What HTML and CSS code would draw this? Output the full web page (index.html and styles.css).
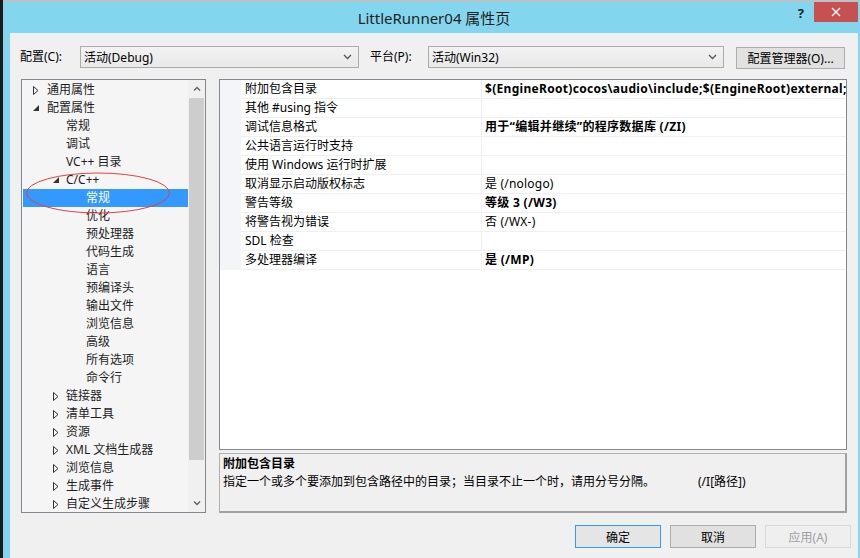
FILE: index.html
```html
<!DOCTYPE html>
<html lang="zh-CN">
<head>
    <meta charset="UTF-8">
    <title>LittleRunner04 属性页</title>
    <link rel="stylesheet" href="styles.css">
</head>
<body>
    <div class="window">
        <div class="titlebar">
            <div></div>
            <div class="title">LittleRunner04 属性页</div>
            <div class="caption-btns">
                <span class="help">?</span>
                <span class="close">
                    <svg width="10" height="10" viewBox="0 0 10 10"><path d="M1 1 L9 9 M9 1 L1 9" stroke="#fff" stroke-width="1.4" fill="none"/></svg>
                </span>
            </div>
        </div>

        <div class="dialog">
            <div class="toolbar">
                <label class="lbl lbl-config">配置(C):</label>
                <div class="combo combo-config">
                    <span>活动(Debug)</span>
                    <svg width="9" height="6" viewBox="0 0 9 6"><path d="M1 1 L4.5 4.5 L8 1" stroke="#555" stroke-width="1.3" fill="none"/></svg>
                </div>
                <label class="lbl lbl-platform">平台(P):</label>
                <div class="combo combo-platform">
                    <span>活动(Win32)</span>
                    <svg width="9" height="6" viewBox="0 0 9 6"><path d="M1 1 L4.5 4.5 L8 1" stroke="#555" stroke-width="1.3" fill="none"/></svg>
                </div>
                <button class="btn btn-manager">配置管理器(O)...</button>
            </div>

            <div class="main">
                <div class="tree">
                    <div class="tree-list">
                        <div class="node lv0"><span class="tw"><svg width="6" height="9" viewBox="0 0 6 9"><path d="M0.5 0.5 L5 4.5 L0.5 8.5 Z" stroke="#333" fill="none"/></svg></span>通用属性</div>
                        <div class="node lv0"><span class="tw"><svg width="6" height="6" viewBox="0 0 6 6"><path d="M6 0 L6 6 L0 6 Z" fill="#333"/></svg></span>配置属性</div>
                        <div class="node lv1">常规</div>
                        <div class="node lv1">调试</div>
                        <div class="node lv1">VC++ 目录</div>
                        <div class="node lv1x"><span class="tw"><svg width="6" height="6" viewBox="0 0 6 6"><path d="M6 0 L6 6 L0 6 Z" fill="#333"/></svg></span>C/C++</div>
                        <div class="node lv2 selected">常规</div>
                        <div class="node lv2">优化</div>
                        <div class="node lv2">预处理器</div>
                        <div class="node lv2">代码生成</div>
                        <div class="node lv2">语言</div>
                        <div class="node lv2">预编译头</div>
                        <div class="node lv2">输出文件</div>
                        <div class="node lv2">浏览信息</div>
                        <div class="node lv2">高级</div>
                        <div class="node lv2">所有选项</div>
                        <div class="node lv2">命令行</div>
                        <div class="node lv1x"><span class="tw"><svg width="6" height="9" viewBox="0 0 6 9"><path d="M0.5 0.5 L5 4.5 L0.5 8.5 Z" stroke="#333" fill="none"/></svg></span>链接器</div>
                        <div class="node lv1x"><span class="tw"><svg width="6" height="9" viewBox="0 0 6 9"><path d="M0.5 0.5 L5 4.5 L0.5 8.5 Z" stroke="#333" fill="none"/></svg></span>清单工具</div>
                        <div class="node lv1x"><span class="tw"><svg width="6" height="9" viewBox="0 0 6 9"><path d="M0.5 0.5 L5 4.5 L0.5 8.5 Z" stroke="#333" fill="none"/></svg></span>资源</div>
                        <div class="node lv1x"><span class="tw"><svg width="6" height="9" viewBox="0 0 6 9"><path d="M0.5 0.5 L5 4.5 L0.5 8.5 Z" stroke="#333" fill="none"/></svg></span>XML 文档生成器</div>
                        <div class="node lv1x"><span class="tw"><svg width="6" height="9" viewBox="0 0 6 9"><path d="M0.5 0.5 L5 4.5 L0.5 8.5 Z" stroke="#333" fill="none"/></svg></span>浏览信息</div>
                        <div class="node lv1x"><span class="tw"><svg width="6" height="9" viewBox="0 0 6 9"><path d="M0.5 0.5 L5 4.5 L0.5 8.5 Z" stroke="#333" fill="none"/></svg></span>生成事件</div>
                        <div class="node lv1x"><span class="tw"><svg width="6" height="9" viewBox="0 0 6 9"><path d="M0.5 0.5 L5 4.5 L0.5 8.5 Z" stroke="#333" fill="none"/></svg></span>自定义生成步骤</div>
                    </div>
                    <div class="vscroll">
                        <div class="arrow"><svg width="8" height="5" viewBox="0 0 8 5"><path d="M1 4.5 L4 1.5 L7 4.5" stroke="#606060" stroke-width="1.4" fill="none"/></svg></div>
                        <div class="track"><div class="thumb"></div></div>
                        <div class="arrow"><svg width="8" height="5" viewBox="0 0 8 5"><path d="M1 0.5 L4 3.5 L7 0.5" stroke="#606060" stroke-width="1.4" fill="none"/></svg></div>
                    </div>
                    <!-- red annotation circle -->
                    <svg class="mark" width="148" height="44" viewBox="0 0 148 44"><ellipse cx="74" cy="22" rx="71.5" ry="20" stroke="#e3423e" stroke-width="1" fill="none"/></svg>
                </div>

                <div class="right">
                    <div class="grid">
                        <div class="row"><div class="margin"></div><div class="name">附加包含目录</div><div class="value bold">$(EngineRoot)cocos\audio\include;$(EngineRoot)external;$(EngineRoot)external\chipmunk\include</div></div>
                        <div class="row"><div class="margin"></div><div class="name">其他 #using 指令</div><div class="value"></div></div>
                        <div class="row"><div class="margin"></div><div class="name">调试信息格式</div><div class="value bold">用于“编辑并继续”的程序数据库 (/ZI)</div></div>
                        <div class="row"><div class="margin"></div><div class="name">公共语言运行时支持</div><div class="value"></div></div>
                        <div class="row"><div class="margin"></div><div class="name">使用 Windows 运行时扩展</div><div class="value"></div></div>
                        <div class="row"><div class="margin"></div><div class="name">取消显示启动版权标志</div><div class="value">是 (/nologo)</div></div>
                        <div class="row"><div class="margin"></div><div class="name">警告等级</div><div class="value bold">等级 3 (/W3)</div></div>
                        <div class="row"><div class="margin"></div><div class="name">将警告视为错误</div><div class="value">否 (/WX-)</div></div>
                        <div class="row"><div class="margin"></div><div class="name">SDL 检查</div><div class="value"></div></div>
                        <div class="row"><div class="margin"></div><div class="name">多处理器编译</div><div class="value bold">是 (/MP)</div></div>
                    </div>
                    <div class="desc">
                        <div class="desc-title">附加包含目录</div>
                        <div class="desc-text">指定一个或多个要添加到包含路径中的目录；当目录不止一个时，请用分号分隔。<span class="switch">(/I[路径])</span></div>
                    </div>
                </div>
            </div>

            <div class="footer">
                <button class="btn btn-ok">确定</button>
                <button class="btn">取消</button>
                <button class="btn btn-disabled">应用(A)</button>
            </div>
        </div>
    </div>
</body>
</html>
```

FILE: styles.css
```css
body {
    margin: 0;
    width: 860px;
    height: 558px;
    overflow: hidden;
    background-color: #1b1b1b;
    font-family: "Noto Sans", "Noto Sans CJK SC", sans-serif;
    font-size: 12px;
    color: #000;
}
.window {
    margin-left: 3px;
    height: 556px;
    border-top: 2px solid #b9c3c7;
    background-color: #84d6ee;
    padding: 0 2px 0 7px;
    display: flex;
    flex-direction: column;
}
.titlebar {
    height: 31px;
    display: grid;
    grid-template-columns: 1fr auto 1fr;
}
.title {
    font-size: 15px;
    line-height: 20px;
    margin-top: 6px;
    color: #1e1e1e;
}
.caption-btns {
    display: flex;
    justify-content: flex-end;
    align-items: flex-start;
}
.help {
    font-weight: bold;
    font-size: 13px;
    line-height: 16px;
    margin-top: 3px;
    margin-right: 10px;
    color: #222;
}
.close {
    width: 44px;
    height: 20px;
    background-color: #c75050;
    display: flex;
    align-items: center;
    justify-content: center;
}
.dialog {
    flex: 1;
    background-color: #f0f0f0;
    padding: 13px 11px 0 10px;
}
.toolbar {
    display: flex;
    align-items: flex-start;
    height: 23px;
}
.lbl {
    line-height: 22px;
    flex-shrink: 0;
}
.lbl-config {
    width: 60px;
}
.lbl-platform {
    width: 58px;
    margin-left: 11px;
}
.combo {
    box-sizing: border-box;
    height: 22px;
    border: 1px solid #acacac;
    background: linear-gradient(#f2f2f2, #e9e9e9);
    display: flex;
    align-items: center;
    justify-content: space-between;
    padding: 0 6px 0 3px;
    flex-shrink: 0;
}
.combo-config {
    width: 279px;
}
.combo-platform {
    width: 296px;
}
.btn {
    box-sizing: border-box;
    font-family: inherit;
    font-size: 12px;
    border: 1px solid #adadad;
    background-color: #e1e1e1;
    color: #000;
    padding: 0;
    height: 23px;
}
.btn-manager {
    width: 109px;
    height: 22px;
    margin-left: 12px;
    margin-top: 1px;
}
.main {
    margin-top: 10px;
    margin-left: 1px;
    display: flex;
    gap: 13px;
}
.tree {
    position: relative;
    box-sizing: border-box;
    width: 185px;
    height: 434px;
    border: 1px solid #828790;
    background-color: #f5f5f5;
    display: flex;
}
.tree-list {
    flex: 1;
    padding: 1px 0 0 1px;
    overflow: hidden;
}
.node {
    height: 18px;
    line-height: 18px;
    white-space: nowrap;
    display: flex;
    align-items: center;
    color: #1e1e1e;
}
.node.lv0 {
    padding-left: 10px;
}
.node.lv0 .tw {
    width: 14px;
}
.node.lv1 {
    padding-left: 43px;
}
.node.lv1x {
    padding-left: 30px;
}
.node.lv1x .tw {
    width: 13px;
}
.node.lv2 {
    padding-left: 63px;
}
.tw {
    display: flex;
    align-items: center;
}
.node.selected {
    background-color: #3399ff;
    color: #fff;
}
.vscroll {
    width: 17px;
    display: flex;
    flex-direction: column;
    background-color: #f0f0f0;
}
.arrow {
    height: 17px;
    display: flex;
    align-items: center;
    justify-content: center;
}
.track {
    flex: 1;
    padding: 1px 1px 0 1px;
}
.thumb {
    height: 362px;
    background-color: #cdcdcd;
}
.mark {
    position: absolute;
    left: 2px;
    top: 91px;
}
.right {
    width: 628px;
    display: flex;
    flex-direction: column;
    gap: 3px;
}
.grid {
    box-sizing: border-box;
    height: 371px;
    border: 1px solid #828790;
    background-color: #fff;
    overflow: hidden;
}
.row {
    display: flex;
    height: 19px;
}
.margin {
    width: 21px;
    background-color: #f3f5f8;
    flex-shrink: 0;
}
.name {
    box-sizing: border-box;
    width: 241px;
    padding-left: 4px;
    line-height: 18px;
    border-bottom: 1px solid #f0f0f0;
    border-right: 1px solid #f0f0f0;
    white-space: nowrap;
    flex-shrink: 0;
}
.value {
    flex: 1;
    padding-left: 3px;
    line-height: 18px;
    border-bottom: 1px solid #f0f0f0;
    white-space: nowrap;
    overflow: hidden;
    letter-spacing: 0.2px;
}
.bold {
    font-weight: bold;
    letter-spacing: 0.3px;
}
.desc {
    box-sizing: border-box;
    height: 60px;
    border: 1px solid #b0b0b0;
    border-right: 2px solid #a0a0a0;
    border-bottom: 2px solid #a0a0a0;
    padding: 1px 3px;
    line-height: 18px;
}
.desc-title {
    font-weight: bold;
}
.switch {
    margin-left: 43px;
}
.footer {
    margin-top: 12px;
    margin-right: -4px;
    display: flex;
    justify-content: flex-end;
    gap: 9px;
}
.footer .btn {
    width: 86px;
}
.btn-ok {
    border-color: #3399ff;
    background-color: #e5e5e5;
}
.btn-disabled {
    border-color: #d9d9d9;
    background-color: #efefef;
    color: #a0a0a0;
}
```
